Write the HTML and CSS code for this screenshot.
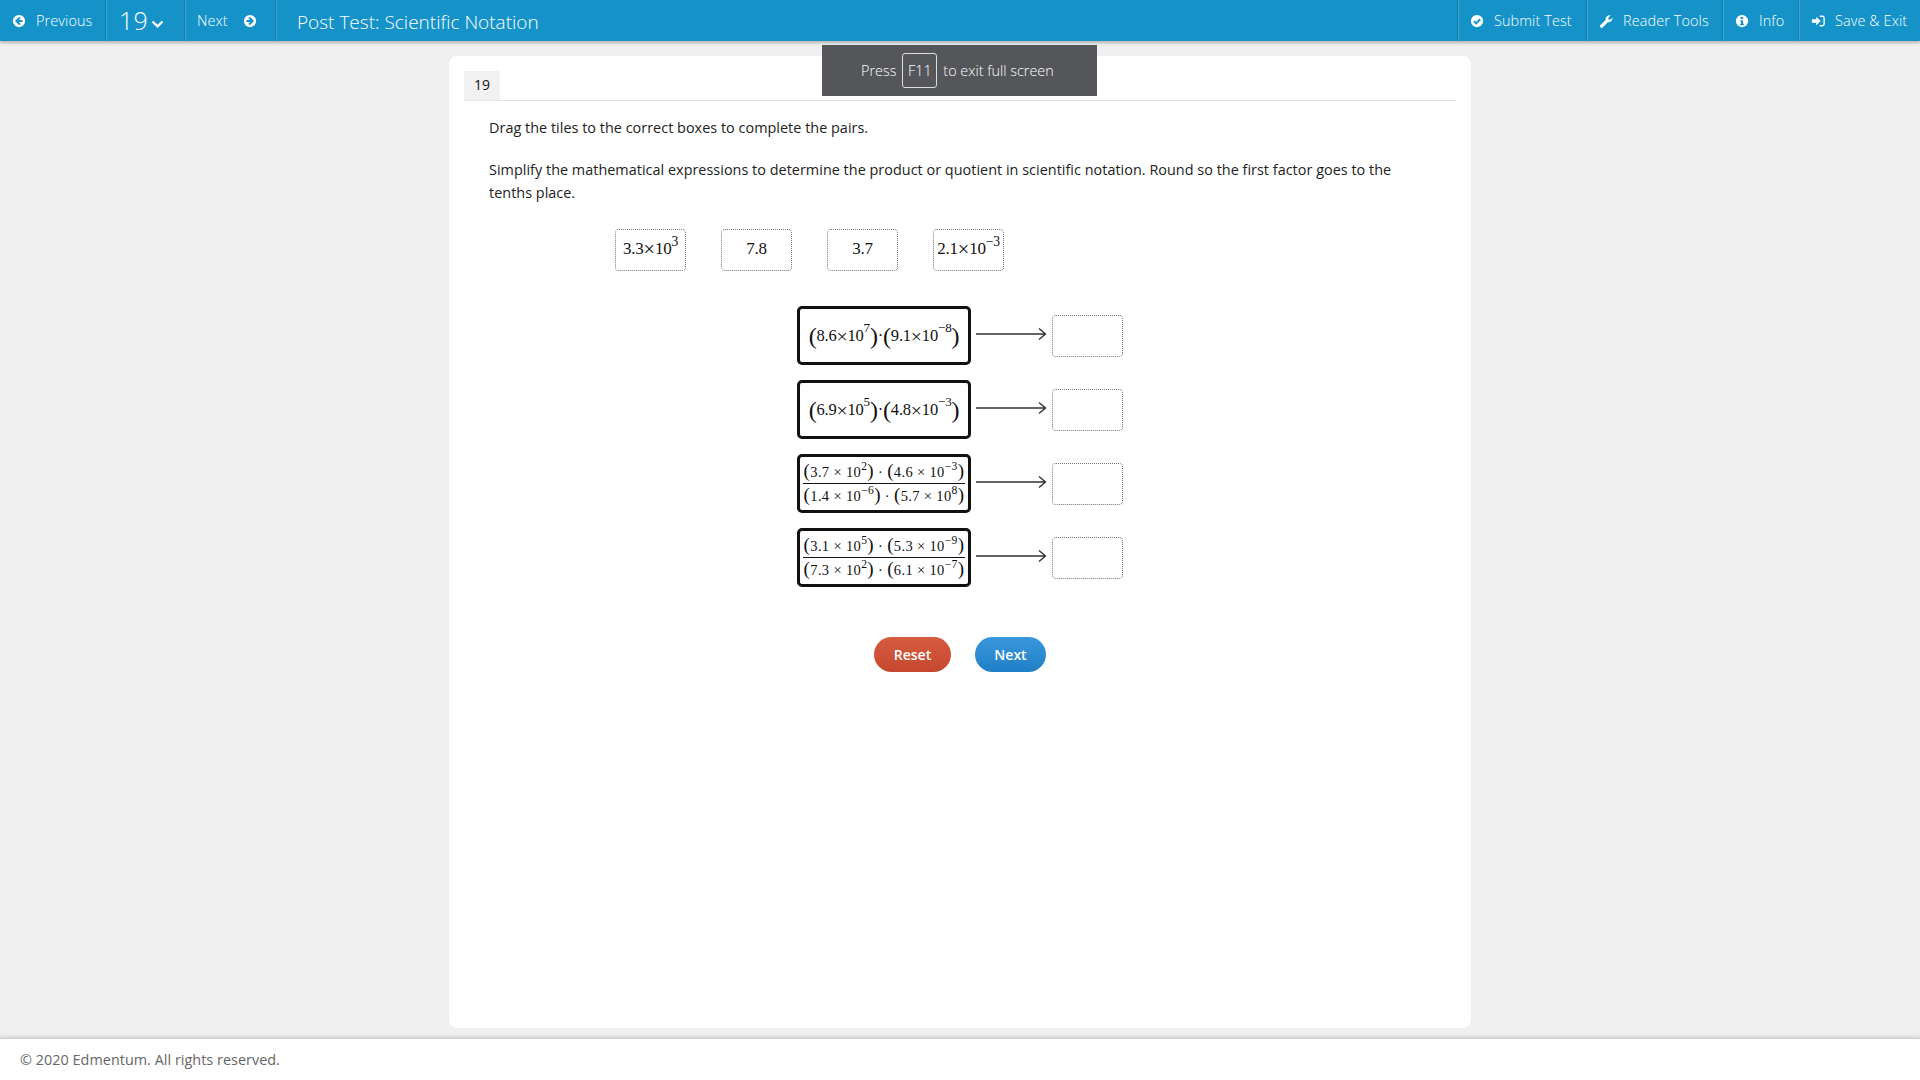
FILE: index.html
```html
<!DOCTYPE html>
<html lang="en">
<head>
<meta charset="utf-8">
<title>Post Test: Scientific Notation</title>
<link rel="stylesheet" href="styles.css">
</head>
<body>
<header class="topbar">
  <div class="bar-group">
    <a class="bar-item prev"><svg class="ic" viewBox="0 0 16 16"><circle cx="8" cy="8" r="7" fill="#fff"/><path d="M9 4 5 8l4 4M5.5 8H12" fill="none" stroke="#1593c9" stroke-width="2.2"/></svg><span>Previous</span></a>
    <a class="bar-item num"><span class="num-text">19</span><svg class="chev" viewBox="0 0 12 8"><path d="M1 1.5 6 6.3l5-4.8" fill="none" stroke="#fff" stroke-width="2.4"/></svg></a>
    <a class="bar-item next"><span>Next</span><svg class="ic" viewBox="0 0 16 16"><circle cx="8" cy="8" r="7" fill="#fff"/><path d="M7 4l4 4-4 4M10.5 8H4" fill="none" stroke="#1593c9" stroke-width="2.2"/></svg></a>
    <div class="title">Post Test: Scientific Notation</div>
  </div>
  <div class="bar-group">
    <a class="bar-item r w-submit"><svg class="ic" viewBox="0 0 16 16"><circle cx="8" cy="8" r="7" fill="#fff"/><path d="M4.4 8.2 7 10.8l4.6-4.8" fill="none" stroke="#1593c9" stroke-width="2.2"/></svg><span>Submit Test</span></a>
    <a class="bar-item r w-reader"><svg class="ic" viewBox="0 0 16 16"><path d="M1.2 13.2 7.6 6.8C7 4.2 9.4 1.2 13.2 1.6L10.6 4.2l.4 2 2 .4 2.4-2.6c.4 3.6-2.6 6-5.4 5.4l-6.2 6.2c-1.6 1-3-.6-2.6-2.4Z" fill="#fff"/></svg><span>Reader Tools</span></a>
    <a class="bar-item r w-info"><svg class="ic" viewBox="0 0 16 16"><circle cx="8" cy="8" r="7" fill="#fff"/><path d="M6.4 3.4h3v2.2h-3ZM5.8 7h3.4v4.2h1v1.6H5.8v-1.6h1V8.6h-1Z" fill="#1593c9"/></svg><span>Info</span></a>
    <a class="bar-item r w-save"><svg class="ic" viewBox="0 0 16 16"><path d="M1 6h5V3l5 5-5 5v-3H1Z" fill="#fff"/><path d="M10 2.5h3a2 2 0 0 1 2 2v7a2 2 0 0 1-2 2h-3" fill="none" stroke="#fff" stroke-width="1.6"/></svg><span>Save &amp; Exit</span></a>
  </div>
</header>

<div class="fs-note"><span>Press</span><span class="key">F11</span><span>to exit full screen</span></div>

<main class="stage">
  <section class="card">
    <div class="tabs"><div class="tab">19</div></div>
    <div class="content">
      <p class="lead">Drag the tiles to the correct boxes to complete the pairs.</p>
      <p class="lead second">Simplify the mathematical expressions to determine the product or quotient in scientific notation. Round so the first factor goes to the tenths place.</p>
      <div class="tiles">
        <div class="tile math">3.3<span class="times">×</span>10<sup>3</sup></div>
        <div class="tile math">7.8</div>
        <div class="tile math">3.7</div>
        <div class="tile math">2.1<span class="times">×</span>10<sup>−3</sup></div>
      </div>
      <div class="pairs">
        <div class="pair">
          <div class="expr math"><span class="par">(</span>8.6<span class="times">×</span>10<sup>7</sup><span class="par">)</span>·<span class="par">(</span>9.1<span class="times">×</span>10<sup>−8</sup><span class="par">)</span></div>
          <svg class="arrow" viewBox="0 0 71 14"><path d="M0 7h69M63 1.5 69.5 7 63 12.5" fill="none" stroke="#333" stroke-width="1.4"/></svg>
          <div class="drop"></div>
        </div>
        <div class="pair">
          <div class="expr math"><span class="par">(</span>6.9<span class="times">×</span>10<sup>5</sup><span class="par">)</span>·<span class="par">(</span>4.8<span class="times">×</span>10<sup>−3</sup><span class="par">)</span></div>
          <svg class="arrow" viewBox="0 0 71 14"><path d="M0 7h69M63 1.5 69.5 7 63 12.5" fill="none" stroke="#333" stroke-width="1.4"/></svg>
          <div class="drop"></div>
        </div>
        <div class="pair">
          <div class="expr frac math">
            <div class="numer"><span class="par-s">(</span>3.7 × 10<sup>2</sup><span class="par-s">)</span> · <span class="par-s">(</span>4.6 × 10<sup>−3</sup><span class="par-s">)</span></div>
            <div class="denom"><span class="par-s">(</span>1.4 × 10<sup>−6</sup><span class="par-s">)</span> · <span class="par-s">(</span>5.7 × 10<sup>8</sup><span class="par-s">)</span></div>
          </div>
          <svg class="arrow" viewBox="0 0 71 14"><path d="M0 7h69M63 1.5 69.5 7 63 12.5" fill="none" stroke="#333" stroke-width="1.4"/></svg>
          <div class="drop"></div>
        </div>
        <div class="pair">
          <div class="expr frac math">
            <div class="numer"><span class="par-s">(</span>3.1 × 10<sup>5</sup><span class="par-s">)</span> · <span class="par-s">(</span>5.3 × 10<sup>−9</sup><span class="par-s">)</span></div>
            <div class="denom"><span class="par-s">(</span>7.3 × 10<sup>2</sup><span class="par-s">)</span> · <span class="par-s">(</span>6.1 × 10<sup>−7</sup><span class="par-s">)</span></div>
          </div>
          <svg class="arrow" viewBox="0 0 71 14"><path d="M0 7h69M63 1.5 69.5 7 63 12.5" fill="none" stroke="#333" stroke-width="1.4"/></svg>
          <div class="drop"></div>
        </div>
      </div>
      <div class="actions">
        <button class="btn reset">Reset</button>
        <button class="btn go">Next</button>
      </div>
    </div>
  </section>
</main>

<footer class="foot">© 2020 Edmentum. All rights reserved.</footer>
</body>
</html>
```
FILE: styles.css
```css
* { box-sizing: border-box; }
html, body { height: 100%; }
body {
  margin: 0;
  height: 100vh;
  overflow: hidden;
  display: flex;
  flex-direction: column;
  background: #f0f0f0;
  font-family: "Open Sans", "Noto Sans", sans-serif;
  color: #222;
}
.topbar {
  height: 41px;
  flex: none;
  display: flex;
  justify-content: space-between;
  background: #1593c9;
  box-shadow: 0 2px 3px rgba(0,0,0,.25);
  position: relative;
}
.bar-group { display: flex; align-items: stretch; }
.bar-item {
  display: flex;
  align-items: center;
  flex: none;
  color: #fff;
  font-size: 14.4px;
  font-weight: 300;
  letter-spacing: .12px;
  border-right: 1px solid #0f7cae;
  box-shadow: 1px 0 0 #3ba7d6;
}
.ic { width: 14px; height: 14px; flex: none; }
.prev { width: 106px; padding-left: 12px; gap: 10px; }
.num { width: 79px; padding-left: 13px; gap: 3px; }
.num-text { font-size: 25px; font-weight: 300; line-height: 1; }
.chev { width: 13px; height: 8px; margin-top: 7px; }
.next { width: 91px; padding-left: 12px; gap: 15px; }
.title { padding: 2px 0 0 21px; font-size: 19px; color: #fff; font-weight: 300; display: flex; align-items: center; }
.r { padding-left: 12px; gap: 10px; border-right: 0; border-left: 1px solid #0f7cae; box-shadow: inset 1px 0 0 #3ba7d6; }
.w-submit { width: 129px; }
.w-reader { width: 136px; }
.w-info { width: 76px; }
.w-save { width: 122px; }
.fs-note {
  position: absolute;
  left: 822px;
  top: 45px;
  width: 275px;
  height: 51px;
  background: #54565a;
  color: #fff;
  font-size: 14.4px;
  font-weight: 300;
  display: flex;
  align-items: center;
  padding-left: 39px;
  gap: 6px;
}
.key {
  width: 35px;
  height: 35px;
  border: 1px solid #ddd;
  border-radius: 3px;
  display: flex;
  align-items: center;
  justify-content: center;
}
.stage { flex: 1; min-height: 0; display: flex; justify-content: center; padding: 15px 0 10px; }
.card {
  width: 1022px;
  background: #fff;
  border-radius: 8px;
  padding: 15px;
  box-shadow: 0 0 2px rgba(0,0,0,.04);
}
.tabs { border-bottom: 1px solid #e4e4e4; display: flex; }
.tab {
  width: 36px;
  height: 29px;
  padding-bottom: 2px;
  background: #f1f1f1;
  font-size: 14px;
  color: #111;
  display: flex;
  align-items: center;
  justify-content: center;
}
.content { padding: 15px 25px 0; }
.lead { margin: 0; font-size: 14.4px; letter-spacing: .03px; line-height: 23px; color: #222; max-width: 920px; }
.second { margin-top: 19px; }
.tiles { display: flex; gap: 35px; margin: 25px 0 0 126px; }
.math { font-family: "Liberation Serif", "DejaVu Serif", serif; color: #111; }
.math sup { font-size: .8em; line-height: 0; vertical-align: baseline; position: relative; top: -.55em; }
.times { font-size: 1.2em; line-height: 0; }
.tile {
  width: 71px;
  height: 42px;
  padding-bottom: 2px;
  border: 1px dotted #777;
  border-radius: 4px;
  display: flex;
  align-items: center;
  justify-content: center;
  font-size: 17px;
  letter-spacing: -.2px;
  white-space: pre;
}
.pairs { margin-top: 35px; display: flex; flex-direction: column; gap: 15px; align-items: center; }
.pair { display: flex; align-items: flex-start; gap: 5px; }
.expr {
  width: 174px;
  height: 59px;
  border: 3px solid #111;
  border-radius: 5px;
  display: flex;
  align-items: center;
  justify-content: center;
  font-size: 16.5px;
  letter-spacing: -.2px;
  white-space: pre;
}
.par { font-size: 24px; line-height: 1; font-weight: 300; }
.par-s { font-size: 19px; line-height: 1; }
.frac { flex-direction: column; font-size: 14.5px; letter-spacing: .35px; }
.numer { border-bottom: 1px solid #111; height: 24px; line-height: 24px; padding: 0 1px; }
.denom { height: 24px; line-height: 24px; padding: 0 1px; }
.arrow { width: 71px; height: 14px; margin-top: 21px; flex: none; }
.drop {
  width: 71px;
  height: 42px;
  margin-top: 9px;
  border: 1px dotted #777;
  border-radius: 4px;
}
.actions { margin-top: 50px; display: flex; justify-content: center; gap: 24px; }
.btn {
  height: 35px;
  border: 0;
  border-radius: 18px;
  color: #fff;
  font: 600 14px "Open Sans", sans-serif;
  padding: 0;
}
.reset { width: 77px; background: linear-gradient(#d65b40, #c5472f); }
.go { width: 71px; background: linear-gradient(#3a97dc, #1f7fc6); }
.foot {
  height: 42px;
  flex: none;
  background: #fff;
  border-top: 1px solid #ccc;
  box-shadow: 0 -2px 3px rgba(0,0,0,.1);
  padding-left: 20px;
  font-size: 14.4px;
  letter-spacing: .03px;
  line-height: 42px;
  color: #666;
}
```
